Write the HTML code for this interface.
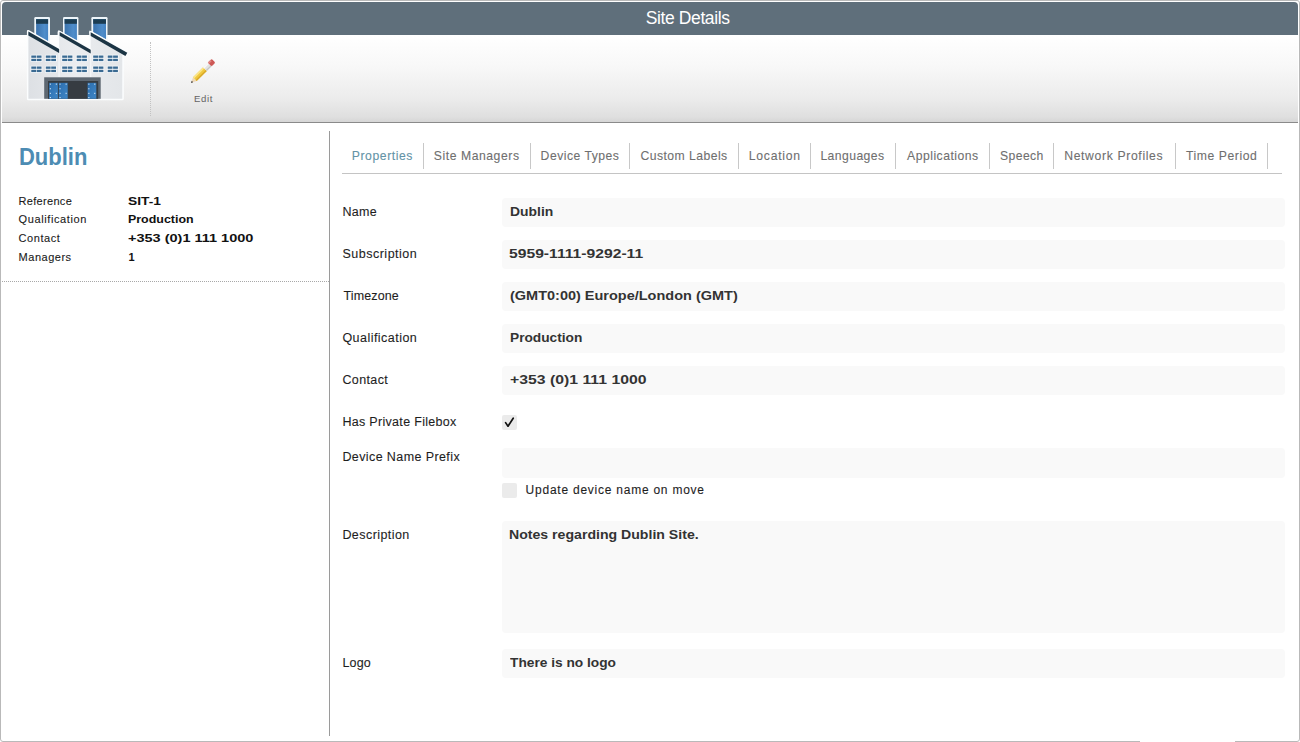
<!DOCTYPE html>
<html><head><meta charset="utf-8"><title>Site Details</title>
<style>
html,body{margin:0;padding:0;}
body{width:1300px;height:742px;overflow:hidden;position:relative;background:#fff;font-family:"Liberation Sans",sans-serif;}
#frame{position:absolute;left:0;top:0;width:1298px;height:740px;border:1px solid #b9b9b9;border-radius:3px;}
#gap{position:absolute;left:1140px;top:740px;width:95px;height:2px;background:#fff;}
.t{position:absolute;white-space:nowrap;transform-origin:0 0;}
#hdr{position:absolute;left:2px;top:2px;width:1296px;height:33px;background:#5f6f7b;border-radius:4px 4px 0 0;}
#tb{position:absolute;left:2px;top:36px;width:1296px;height:86px;background:linear-gradient(#ffffff 0%,#f8f8f8 35%,#ececec 72%,#dfdfdf 94%,#d6d6d6 100%);border-bottom:1px solid #8a8a8a;}
#tbsep{position:absolute;left:150px;top:42px;width:0;height:74px;border-left:1px dotted #c2c2c2;}
#ldot{position:absolute;left:2px;top:281px;width:327px;height:0;border-top:1px dotted #a8a8a8;}
#vdiv{position:absolute;left:329px;top:131px;width:1px;height:605px;background:#9a9a9a;}
.tsep{position:absolute;top:143px;width:1px;height:26px;background:#c8c8c8;}
#tline{position:absolute;left:342px;top:173px;width:940px;height:1px;background:#c4c4c4;}
.box{position:absolute;left:502px;width:783px;background:#f9f9f9;border-radius:4px;}
.cb{position:absolute;left:502px;width:15px;height:15px;background:#ebebeb;border-radius:2px;}
svg{position:absolute;}
</style></head>
<body>
<div id="frame"></div><div id="gap"></div>
<div id="hdr"></div>
<div id="tb"></div><div id="tbsep"></div>
<div id="ldot"></div><div id="vdiv"></div>
<div class="tsep" style="left:423px"></div>
<div class="tsep" style="left:530px"></div>
<div class="tsep" style="left:629px"></div>
<div class="tsep" style="left:738px"></div>
<div class="tsep" style="left:810px"></div>
<div class="tsep" style="left:895px"></div>
<div class="tsep" style="left:989px"></div>
<div class="tsep" style="left:1053px"></div>
<div class="tsep" style="left:1175px"></div>
<div class="tsep" style="left:1267px"></div>
<div id="tline"></div>
<div class="box" style="top:198px;height:29px"></div>
<div class="box" style="top:240px;height:29px"></div>
<div class="box" style="top:282px;height:29px"></div>
<div class="box" style="top:324px;height:29px"></div>
<div class="box" style="top:366px;height:29px"></div>
<div class="box" style="top:448px;height:30px"></div>
<div class="box" style="top:521px;height:112px"></div>
<div class="box" style="top:649px;height:29px"></div>
<div class="cb" style="top:415px"></div>
<div class="cb" style="top:483px"></div>
<svg style="left:502px;top:415px" width="15" height="15" viewBox="0 0 15 15"><path d="M3.6,7.6 L6.0,11.2 L11.2,3.2" fill="none" stroke="#111" stroke-width="1.7" stroke-linecap="round" stroke-linejoin="round"/></svg>
<div class="t" id="t0" style="left:645.80px;top:10.18px;font-size:17.5px;line-height:17.5px;color:#ffffff;font-weight:normal;letter-spacing:-0.400px;">Site Details</div>
<div class="t" id="t1" style="left:194.00px;top:93.57px;font-size:9.6px;line-height:9.6px;color:#646464;font-weight:normal;letter-spacing:0.600px;">Edit</div>
<div class="t" id="t2" style="left:18.63px;top:146.13px;font-size:23px;line-height:23px;color:#4d8cb3;font-weight:bold;transform:scaleX(0.9557);">Dublin</div>
<div class="t" id="t3" style="left:18.60px;top:195.59px;font-size:11px;line-height:11px;color:#1a1a1a;font-weight:normal;letter-spacing:0.300px;-webkit-text-stroke:0.1px #1a1a1a;">Reference</div>
<div class="t" id="t4" style="left:128.32px;top:195.59px;font-size:11px;line-height:11px;color:#111;font-weight:bold;transform:scaleX(1.2500);">SIT-1</div>
<div class="t" id="t5" style="left:18.60px;top:214.46px;font-size:11px;line-height:11px;color:#1a1a1a;font-weight:normal;letter-spacing:0.600px;-webkit-text-stroke:0.1px #1a1a1a;">Qualification</div>
<div class="t" id="t6" style="left:128.36px;top:214.46px;font-size:11px;line-height:11px;color:#111;font-weight:bold;transform:scaleX(1.1293);">Production</div>
<div class="t" id="t7" style="left:18.60px;top:233.33px;font-size:11px;line-height:11px;color:#1a1a1a;font-weight:normal;letter-spacing:0.567px;-webkit-text-stroke:0.1px #1a1a1a;">Contact</div>
<div class="t" id="t8" style="left:128.30px;top:233.33px;font-size:11px;line-height:11px;color:#111;font-weight:bold;transform:scaleX(1.3179);">+353 (0)1 111 1000</div>
<div class="t" id="t9" style="left:18.60px;top:252.20px;font-size:11px;line-height:11px;color:#1a1a1a;font-weight:normal;letter-spacing:0.514px;-webkit-text-stroke:0.1px #1a1a1a;">Managers</div>
<div class="t" id="t10" style="left:128.40px;top:252.20px;font-size:11px;line-height:11px;color:#111;font-weight:bold;">1</div>
<div class="t" id="t11" style="left:351.80px;top:149.87px;font-size:12.2px;line-height:12.2px;color:#6393a6;font-weight:normal;letter-spacing:0.567px;-webkit-text-stroke:0.1px #6393a6;">Properties</div>
<div class="t" id="t12" style="left:433.80px;top:149.87px;font-size:12.2px;line-height:12.2px;color:#6f6f6f;font-weight:normal;letter-spacing:0.550px;-webkit-text-stroke:0.1px #6f6f6f;">Site Managers</div>
<div class="t" id="t13" style="left:540.60px;top:149.87px;font-size:12.2px;line-height:12.2px;color:#6f6f6f;font-weight:normal;letter-spacing:0.491px;-webkit-text-stroke:0.1px #6f6f6f;">Device Types</div>
<div class="t" id="t14" style="left:640.40px;top:149.87px;font-size:12.2px;line-height:12.2px;color:#6f6f6f;font-weight:normal;letter-spacing:0.458px;-webkit-text-stroke:0.1px #6f6f6f;">Custom Labels</div>
<div class="t" id="t15" style="left:748.80px;top:149.87px;font-size:12.2px;line-height:12.2px;color:#6f6f6f;font-weight:normal;letter-spacing:0.729px;-webkit-text-stroke:0.1px #6f6f6f;">Location</div>
<div class="t" id="t16" style="left:820.40px;top:149.87px;font-size:12.2px;line-height:12.2px;color:#6f6f6f;font-weight:normal;letter-spacing:0.425px;-webkit-text-stroke:0.1px #6f6f6f;">Languages</div>
<div class="t" id="t17" style="left:907.00px;top:149.87px;font-size:12.2px;line-height:12.2px;color:#6f6f6f;font-weight:normal;letter-spacing:0.500px;-webkit-text-stroke:0.1px #6f6f6f;">Applications</div>
<div class="t" id="t18" style="left:1000.00px;top:149.87px;font-size:12.2px;line-height:12.2px;color:#6f6f6f;font-weight:normal;letter-spacing:0.400px;-webkit-text-stroke:0.1px #6f6f6f;">Speech</div>
<div class="t" id="t19" style="left:1064.20px;top:149.87px;font-size:12.2px;line-height:12.2px;color:#6f6f6f;font-weight:normal;letter-spacing:0.647px;-webkit-text-stroke:0.1px #6f6f6f;">Network Profiles</div>
<div class="t" id="t20" style="left:1186.00px;top:149.87px;font-size:12.2px;line-height:12.2px;color:#6f6f6f;font-weight:normal;letter-spacing:0.550px;-webkit-text-stroke:0.1px #6f6f6f;">Time Period</div>
<div class="t" id="t21" style="left:342.40px;top:206.22px;font-size:12.5px;line-height:12.5px;color:#1e1e1e;font-weight:normal;letter-spacing:0.333px;-webkit-text-stroke:0.1px #1e1e1e;">Name</div>
<div class="t" id="t22" style="left:342.40px;top:248.12px;font-size:12.5px;line-height:12.5px;color:#1e1e1e;font-weight:normal;letter-spacing:0.509px;-webkit-text-stroke:0.1px #1e1e1e;">Subscription</div>
<div class="t" id="t23" style="left:343.40px;top:290.12px;font-size:12.5px;line-height:12.5px;color:#1e1e1e;font-weight:normal;letter-spacing:0.143px;-webkit-text-stroke:0.1px #1e1e1e;">Timezone</div>
<div class="t" id="t24" style="left:342.40px;top:332.12px;font-size:12.5px;line-height:12.5px;color:#1e1e1e;font-weight:normal;letter-spacing:0.467px;-webkit-text-stroke:0.1px #1e1e1e;">Qualification</div>
<div class="t" id="t25" style="left:342.40px;top:373.92px;font-size:12.5px;line-height:12.5px;color:#1e1e1e;font-weight:normal;letter-spacing:0.383px;-webkit-text-stroke:0.1px #1e1e1e;">Contact</div>
<div class="t" id="t26" style="left:342.40px;top:416.32px;font-size:12.5px;line-height:12.5px;color:#1e1e1e;font-weight:normal;letter-spacing:0.311px;-webkit-text-stroke:0.1px #1e1e1e;">Has Private Filebox</div>
<div class="t" id="t27" style="left:342.40px;top:451.32px;font-size:12.5px;line-height:12.5px;color:#1e1e1e;font-weight:normal;letter-spacing:0.400px;-webkit-text-stroke:0.1px #1e1e1e;">Device Name Prefix</div>
<div class="t" id="t28" style="left:342.40px;top:529.32px;font-size:12.5px;line-height:12.5px;color:#1e1e1e;font-weight:normal;letter-spacing:0.440px;-webkit-text-stroke:0.1px #1e1e1e;">Description</div>
<div class="t" id="t29" style="left:342.40px;top:656.62px;font-size:12.5px;line-height:12.5px;color:#1e1e1e;font-weight:normal;letter-spacing:0.200px;-webkit-text-stroke:0.1px #1e1e1e;">Logo</div>
<div class="t" id="t30" style="left:509.79px;top:206.32px;font-size:12.2px;line-height:12.2px;color:#333;font-weight:bold;transform:scaleX(1.1405);">Dublin</div>
<div class="t" id="t31" style="left:509.00px;top:248.32px;font-size:12.2px;line-height:12.2px;color:#333;font-weight:bold;transform:scaleX(1.2856);">5959-1111-9292-11</div>
<div class="t" id="t32" style="left:510.00px;top:290.32px;font-size:12.2px;line-height:12.2px;color:#333;font-weight:bold;transform:scaleX(1.1885);">(GMT0:00) Europe/London (GMT)</div>
<div class="t" id="t33" style="left:509.58px;top:332.27px;font-size:12.2px;line-height:12.2px;color:#333;font-weight:bold;transform:scaleX(1.1250);">Production</div>
<div class="t" id="t34" style="left:509.85px;top:374.17px;font-size:12.2px;line-height:12.2px;color:#333;font-weight:bold;transform:scaleX(1.2952);">+353 (0)1 111 1000</div>
<div class="t" id="t35" style="left:509.00px;top:528.57px;font-size:12.2px;line-height:12.2px;color:#333;font-weight:bold;transform:scaleX(1.1573);">Notes regarding Dublin Site.</div>
<div class="t" id="t36" style="left:510.49px;top:656.77px;font-size:12.2px;line-height:12.2px;color:#333;font-weight:bold;transform:scaleX(1.1263);">There is no logo</div>
<div class="t" id="t37" style="left:525.60px;top:484.44px;font-size:12px;line-height:12px;color:#1e1e1e;font-weight:normal;letter-spacing:0.760px;-webkit-text-stroke:0.1px #1e1e1e;">Update device name on move</div>
<svg style="left:20px;top:10px" width="115" height="95" viewBox="20 10 115 95"><defs><linearGradient id="cg" x1="0" y1="0" x2="1" y2="0"><stop offset="0" stop-color="#3a72ad"/><stop offset="0.7" stop-color="#4f8dca"/><stop offset="1" stop-color="#4583c2"/></linearGradient><linearGradient id="capg" x1="0" y1="0" x2="0" y2="1"><stop offset="0" stop-color="#2a5470"/><stop offset="0.35" stop-color="#1b3b50"/><stop offset="1" stop-color="#1d3d52"/></linearGradient><linearGradient id="bg" x1="0" y1="0" x2="1" y2="0"><stop offset="0" stop-color="#dde0e4"/><stop offset="0.5" stop-color="#eaecef"/><stop offset="1" stop-color="#e3e6e9"/></linearGradient><linearGradient id="dg" x1="0" y1="0" x2="1" y2="1"><stop offset="0" stop-color="#2c6eae"/><stop offset="1" stop-color="#3f86c6"/></linearGradient></defs><rect x="34.3" y="17.1" width="15.70" height="32" rx="1.2" fill="#eef5fa"/><rect x="36.1" y="19.0" width="12.00" height="30" fill="url(#cg)"/><rect x="36.1" y="19.0" width="12.00" height="4.8" fill="url(#capg)"/><rect x="63.0" y="17.1" width="15.40" height="32" rx="1.2" fill="#eef5fa"/><rect x="64.6" y="19.0" width="12.30" height="30" fill="url(#cg)"/><rect x="64.6" y="19.0" width="12.30" height="4.8" fill="url(#capg)"/><rect x="91.4" y="17.1" width="16.10" height="32" rx="1.2" fill="#eef5fa"/><rect x="93.2" y="19.0" width="12.80" height="30" fill="url(#cg)"/><rect x="93.2" y="19.0" width="12.80" height="4.8" fill="url(#capg)"/><polygon points="28.4,31.6 59.1,49.1 59.1,32.0 90.7,49.8 90.7,32.2 122.3,50.0 122.3,98.8 28.4,98.8" fill="#fbfdfe" stroke="#fbfdfe" stroke-width="3.0" stroke-linejoin="round"/><polygon points="28.4,31.6 59.1,49.1 59.1,32.0 90.7,49.8 90.7,32.2 122.3,50.0 122.3,98.8 28.4,98.8" fill="url(#bg)"/><rect x="58.4" y="48" width="1.4" height="29" fill="#f4f6f8"/><rect x="90.0" y="49" width="1.4" height="28" fill="#f4f6f8"/><polygon points="27.099999999999998,29.900000000000002 59.800000000000004,48.0 59.6,50.1 27.099999999999998,32.6" fill="#fbfdfe"/><polygon points="58.300000000000004,30.3 91.4,48.699999999999996 91.2,50.8 58.300000000000004,33.0" fill="#fbfdfe"/><polygon points="89.4,30.500000000000004 128.0,51.6 127.8,53.7 89.4,33.2" fill="#fbfdfe"/><polygon points="28.4,31.6 59.1,49.1 59.1,52.9 28.4,35.4" fill="#1b3444"/><polygon points="59.6,32.0 90.7,49.8 90.7,53.599999999999994 59.6,35.8" fill="#1b3444"/><polygon points="90.7,32.2 127.3,52.7 125.4,56.0 90.7,36.0" fill="#1b3444"/><rect x="30.5" y="54.7" width="11.8" height="7.2" rx="1" fill="#f8fafc"/><rect x="31.3" y="55.5" width="4.8" height="2.3" fill="#3a6a92"/><rect x="36.7" y="55.5" width="4.8" height="2.3" fill="#3a6a92"/><rect x="31.3" y="58.8" width="4.8" height="2.3" fill="#3a6a92"/><rect x="36.7" y="58.8" width="4.8" height="2.3" fill="#3a6a92"/><rect x="45.0" y="54.7" width="11.8" height="7.2" rx="1" fill="#f8fafc"/><rect x="45.8" y="55.5" width="4.8" height="2.3" fill="#3a6a92"/><rect x="51.199999999999996" y="55.5" width="4.8" height="2.3" fill="#3a6a92"/><rect x="45.8" y="58.8" width="4.8" height="2.3" fill="#3a6a92"/><rect x="51.199999999999996" y="58.8" width="4.8" height="2.3" fill="#3a6a92"/><rect x="61.400000000000006" y="54.7" width="11.8" height="7.2" rx="1" fill="#f8fafc"/><rect x="62.2" y="55.5" width="4.8" height="2.3" fill="#3a6a92"/><rect x="67.60000000000001" y="55.5" width="4.8" height="2.3" fill="#3a6a92"/><rect x="62.2" y="58.8" width="4.8" height="2.3" fill="#3a6a92"/><rect x="67.60000000000001" y="58.8" width="4.8" height="2.3" fill="#3a6a92"/><rect x="75.9" y="54.7" width="11.8" height="7.2" rx="1" fill="#f8fafc"/><rect x="76.7" y="55.5" width="4.8" height="2.3" fill="#3a6a92"/><rect x="82.10000000000001" y="55.5" width="4.8" height="2.3" fill="#3a6a92"/><rect x="76.7" y="58.8" width="4.8" height="2.3" fill="#3a6a92"/><rect x="82.10000000000001" y="58.8" width="4.8" height="2.3" fill="#3a6a92"/><rect x="92.4" y="54.7" width="11.8" height="7.2" rx="1" fill="#f8fafc"/><rect x="93.2" y="55.5" width="4.8" height="2.3" fill="#3a6a92"/><rect x="98.60000000000001" y="55.5" width="4.8" height="2.3" fill="#3a6a92"/><rect x="93.2" y="58.8" width="4.8" height="2.3" fill="#3a6a92"/><rect x="98.60000000000001" y="58.8" width="4.8" height="2.3" fill="#3a6a92"/><rect x="106.9" y="54.7" width="11.8" height="7.2" rx="1" fill="#f8fafc"/><rect x="107.7" y="55.5" width="4.8" height="2.3" fill="#3a6a92"/><rect x="113.10000000000001" y="55.5" width="4.8" height="2.3" fill="#3a6a92"/><rect x="107.7" y="58.8" width="4.8" height="2.3" fill="#3a6a92"/><rect x="113.10000000000001" y="58.8" width="4.8" height="2.3" fill="#3a6a92"/><rect x="30.5" y="65.7" width="11.8" height="7.2" rx="1" fill="#f8fafc"/><rect x="31.3" y="66.5" width="4.8" height="2.3" fill="#3a6a92"/><rect x="36.7" y="66.5" width="4.8" height="2.3" fill="#3a6a92"/><rect x="31.3" y="69.8" width="4.8" height="2.3" fill="#3a6a92"/><rect x="36.7" y="69.8" width="4.8" height="2.3" fill="#3a6a92"/><rect x="45.0" y="65.7" width="11.8" height="7.2" rx="1" fill="#f8fafc"/><rect x="45.8" y="66.5" width="4.8" height="2.3" fill="#3a6a92"/><rect x="51.199999999999996" y="66.5" width="4.8" height="2.3" fill="#3a6a92"/><rect x="45.8" y="69.8" width="4.8" height="2.3" fill="#3a6a92"/><rect x="51.199999999999996" y="69.8" width="4.8" height="2.3" fill="#3a6a92"/><rect x="61.400000000000006" y="65.7" width="11.8" height="7.2" rx="1" fill="#f8fafc"/><rect x="62.2" y="66.5" width="4.8" height="2.3" fill="#3a6a92"/><rect x="67.60000000000001" y="66.5" width="4.8" height="2.3" fill="#3a6a92"/><rect x="62.2" y="69.8" width="4.8" height="2.3" fill="#3a6a92"/><rect x="67.60000000000001" y="69.8" width="4.8" height="2.3" fill="#3a6a92"/><rect x="75.9" y="65.7" width="11.8" height="7.2" rx="1" fill="#f8fafc"/><rect x="76.7" y="66.5" width="4.8" height="2.3" fill="#3a6a92"/><rect x="82.10000000000001" y="66.5" width="4.8" height="2.3" fill="#3a6a92"/><rect x="76.7" y="69.8" width="4.8" height="2.3" fill="#3a6a92"/><rect x="82.10000000000001" y="69.8" width="4.8" height="2.3" fill="#3a6a92"/><rect x="92.4" y="65.7" width="11.8" height="7.2" rx="1" fill="#f8fafc"/><rect x="93.2" y="66.5" width="4.8" height="2.3" fill="#3a6a92"/><rect x="98.60000000000001" y="66.5" width="4.8" height="2.3" fill="#3a6a92"/><rect x="93.2" y="69.8" width="4.8" height="2.3" fill="#3a6a92"/><rect x="98.60000000000001" y="69.8" width="4.8" height="2.3" fill="#3a6a92"/><rect x="106.9" y="65.7" width="11.8" height="7.2" rx="1" fill="#f8fafc"/><rect x="107.7" y="66.5" width="4.8" height="2.3" fill="#3a6a92"/><rect x="113.10000000000001" y="66.5" width="4.8" height="2.3" fill="#3a6a92"/><rect x="107.7" y="69.8" width="4.8" height="2.3" fill="#3a6a92"/><rect x="113.10000000000001" y="69.8" width="4.8" height="2.3" fill="#3a6a92"/><rect x="44.2" y="77.3" width="56.5" height="21.5" fill="#5d6771"/><rect x="48.0" y="81.0" width="50.2" height="17.8" fill="#363c42"/><rect x="49.1" y="82.8" width="8.80" height="16" fill="url(#dg)"/><rect x="49.800000000000004" y="83.6" width="1.1" height="1.1" fill="#d6e8f7"/><rect x="49.800000000000004" y="88.2" width="1.1" height="1.1" fill="#d6e8f7"/><rect x="49.800000000000004" y="92.8" width="1.1" height="1.1" fill="#d6e8f7"/><rect x="49.800000000000004" y="97.0" width="1.1" height="1.1" fill="#d6e8f7"/><rect x="55.8" y="83.6" width="1.1" height="1.1" fill="#d6e8f7"/><rect x="55.8" y="92.8" width="1.1" height="1.1" fill="#d6e8f7"/><rect x="58.8" y="82.8" width="8.90" height="16" fill="url(#dg)"/><rect x="59.5" y="83.6" width="1.1" height="1.1" fill="#d6e8f7"/><rect x="59.5" y="88.2" width="1.1" height="1.1" fill="#d6e8f7"/><rect x="59.5" y="92.8" width="1.1" height="1.1" fill="#d6e8f7"/><rect x="59.5" y="97.0" width="1.1" height="1.1" fill="#d6e8f7"/><rect x="65.60000000000001" y="83.6" width="1.1" height="1.1" fill="#d6e8f7"/><rect x="65.60000000000001" y="92.8" width="1.1" height="1.1" fill="#d6e8f7"/><rect x="87.6" y="82.8" width="8.70" height="16" fill="url(#dg)"/><rect x="88.3" y="83.6" width="1.1" height="1.1" fill="#d6e8f7"/><rect x="88.3" y="88.2" width="1.1" height="1.1" fill="#d6e8f7"/><rect x="88.3" y="92.8" width="1.1" height="1.1" fill="#d6e8f7"/><rect x="88.3" y="97.0" width="1.1" height="1.1" fill="#d6e8f7"/><rect x="94.2" y="83.6" width="1.1" height="1.1" fill="#d6e8f7"/><rect x="94.2" y="92.8" width="1.1" height="1.1" fill="#d6e8f7"/></svg>
<svg style="left:185px;top:52px" width="36" height="36" viewBox="185 52 36 36"><g transform="translate(191.0,82.9) rotate(-44.5)"><polygon points="0,0 5.4,-2.6 5.4,2.6" fill="#eed8b8"/><polygon points="0,0 2.0,-0.95 2.0,0.95" fill="#333"/><rect x="5.4" y="-2.6" width="14.2" height="5.2" fill="#f0c83e"/><rect x="5.4" y="-2.6" width="14.2" height="1.6" fill="#fae58a"/><rect x="5.4" y="1.2" width="14.2" height="1.4" fill="#d8a82a"/><rect x="19.6" y="-2.6" width="7" height="5.2" fill="#e4e4e4"/><rect x="19.6" y="-2.6" width="7" height="1.7" fill="#f9f9f9"/><rect x="19.6" y="1.3" width="7" height="1.3" fill="#c6c6c6"/><rect x="26.2" y="-2.7" width="5.4" height="5.4" rx="1.3" fill="#cd5855"/><rect x="26.2" y="-2.7" width="3.8" height="1.7" fill="#e08884"/></g></svg>
</body></html>
